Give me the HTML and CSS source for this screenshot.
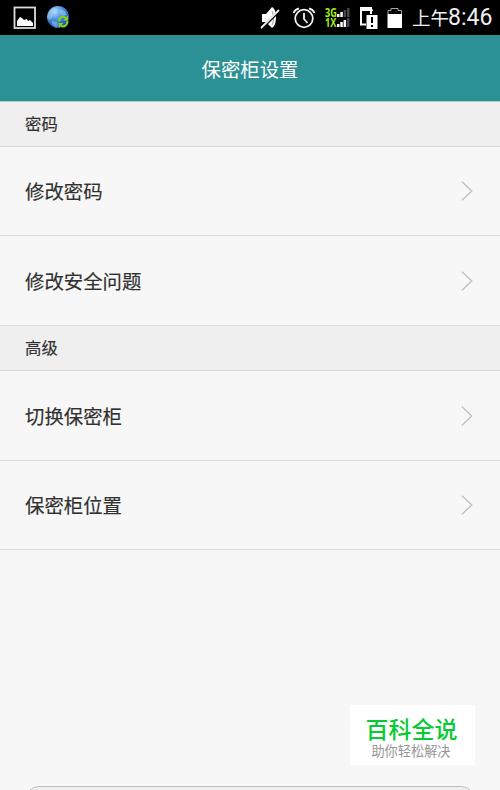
FILE: index.html
```html
<!DOCTYPE html>
<html lang="zh-CN">
<head>
<meta charset="utf-8">
<title>保密柜设置</title>
<link rel="stylesheet" href="styles.css">
</head>
<body>
<div class="screen">
  <div class="status">
    <svg class="picture" width="24" height="24" viewBox="0 0 24 24"><rect x="1.500" y="1.500" width="20.500" height="20.500" fill="none" stroke="#ddd" stroke-width="1.800"/><path d="M4 20v-5l3-4 2 1 2 2 3-1 1 2 2-1 3 3v3z" fill="#fff"/></svg>
    <svg class="globe" width="24" height="24" viewBox="0 0 24 24">
      <defs><radialGradient id="sea" cx=".35" cy=".25" r=".8"><stop offset="0" stop-color="#b8dcfa"/><stop offset=".45" stop-color="#4c91dc"/><stop offset="1" stop-color="#1449a5"/></radialGradient></defs>
      <circle cx="12" cy="11" r="11" fill="url(#sea)"/>
      <path d="M3 6l5-4 4 1-1 3-4 2-1 4-3 2-2-3zM14 3l5 2 2 4-4 1-3-2zM6 15l5 1 1 4-2 2-4-4z" fill="#a5d1f4" opacity=".5"/>
      <path d="M13 15.500c0-5 5-6 7-3M21.500 15c0 5-5 7-7 4" fill="none" stroke="#8bcf25" stroke-width="2"/><path d="M22 9.500v5h-5zM12.500 22v-5h5z" fill="#8bcf25"/>
    </svg>
    <svg class="mute" width="21" height="24" viewBox="0 0 21 24"><path d="M2 8h4l6-7c3 2 4 5 4 10s-1 9-4 11l-6-6H2z" fill="#fff"/><path d="M12 5c2 4 2 10 0 14" fill="none" stroke="#999" stroke-width="1"/><path d="M1.500 22.500L19.500 4.500" stroke="#000" stroke-width="3"/><path d="M1 22L19 4" stroke="#f0f0f0" stroke-width="1.800"/></svg>
    <svg class="alarm" width="24" height="24" viewBox="0 0 24 24"><g fill="none" stroke="#f2f2f2" stroke-width="1.800"><circle cx="12" cy="12.500" r="8.800"/><path d="M1.500 7C2.500 4.500 4.500 3 7 2.500M22.500 7C21.500 4.500 19.500 3 17 2.500M12 7v6l3.500 4"/></g></svg>
    <div class="signal">
      <div class="net"><span>3G</span><svg width="14" height="10" viewBox="0 0 14 10"><path d="M0 6h2.500v3H0zM3.300 4h2.500v5H3.300z" fill="#fff"/><path d="M6.600 2h2.500v7H6.600zM10 0h2.500v9H10z" fill="#484848"/></svg></div>
      <div class="net"><span>1X</span><svg width="14" height="10" viewBox="0 0 14 10"><path d="M0 6h2.500v3H0zM3.300 4h2.500v5H3.300zM6.600 2h2.500v7H6.600z" fill="#fff"/><path d="M10 0h2.500v9H10z" fill="#484848"/></svg></div>
    </div>
    <svg class="sim" width="19" height="24" viewBox="0 0 19 24"><path d="M12 8V2H2v16.500h5" fill="none" stroke="#fff" stroke-width="2"/><path d="M1 1h10l3 3v1H1z" fill="#fff"/><path d="M7.500 9h11v14h-11z" fill="#fff"/><path d="M12 11h2v6h-2zM12 19h2v2h-2z" fill="#000"/></svg>
    <svg class="battery" width="16" height="22" viewBox="0 0 16 22"><path d="M1 7V3.500h3v-2h7v2h3.500V7" fill="none" stroke="#aaa" stroke-width="1"/><path d="M.5 7h14.500v14H.5z" fill="#fff"/></svg>
    <span class="time"><span class="ampm">上午</span>8:46</span>
  </div>
  <header class="title">保密柜设置</header>
  <h2 class="section">密码</h2>
  <div class="row"><span>修改密码</span><svg class="chevron" viewBox="0 0 12 20"><path d="M1 .8L10.800 10 1 19.200"/></svg></div>
  <div class="row tall"><span>修改安全问题</span><svg class="chevron" viewBox="0 0 12 20"><path d="M1 .8L10.800 10 1 19.200"/></svg></div>
  <h2 class="section">高级</h2>
  <div class="row tall"><span>切换保密柜</span><svg class="chevron" viewBox="0 0 12 20"><path d="M1 .8L10.800 10 1 19.200"/></svg></div>
  <div class="row"><span>保密柜位置</span><svg class="chevron" viewBox="0 0 12 20"><path d="M1 .8L10.800 10 1 19.200"/></svg></div>
  <div class="bottom">
    <div class="brand"><div class="brand-name">百科全说</div><div class="brand-sub">助你轻松解决</div></div>
    <div class="button"></div>
  </div>
</div>
</body>
</html>
```
FILE: styles.css
```css
* { box-sizing: border-box; }
body { margin: 0; background: #f7f7f7; font-family: "Noto Sans CJK SC", sans-serif; color: #303030; }
.screen { width: 500px; height: 790px; overflow: hidden; display: flex; flex-direction: column; }
.status { height: 35px; flex: none; background: #000; display: flex; align-items: center; padding-left: 13px; }
.status svg { flex: none; }
.globe { margin-left: 9px; }
.mute { margin-left: 190px; }
.alarm { margin-left: 11px; }
.signal { width: 26px; margin-left: 9px; }
.net { display: flex; align-items: center; height: 10px; width: 26px; color: #a1ee16; font: bold 11.500px/10px "Open Sans", sans-serif; }
.net span { width: 12px; flex: none; transform: scaleX(.8); transform-origin: left; }
.sim { margin-left: 8px; }
.battery { margin-left: 9px; }
.time { margin-left: 9px; display: flex; align-items: center; color: #eee; font: 23px/35px Roboto, sans-serif; white-space: nowrap; }
.ampm { width: 36px; font: 18.500px/35px "Noto Sans CJK SC", sans-serif; }
.title { height: 67px; flex: none; background: #2c9195; color: #fff; text-align: center; font-size: 19.400px; line-height: 67px; border-bottom: 1px solid #a9d0d1; }
.section { height: 45px; flex: none; margin: 0; padding-left: 25px; background: #efefef; border-bottom: 1px solid #d8d8d8; font-size: 16.400px; font-weight: 400; line-height: 43px; -webkit-text-stroke: .15px #303030; }
.row { height: 89px; flex: none; padding: 0 27px 0 25px; display: flex; align-items: center; justify-content: space-between; border-bottom: 1px solid #dcdcdc; font-size: 19.400px; }
.row span { padding-bottom: 2px; -webkit-text-stroke: .15px #303030; }
.row.tall { height: 90px; }
.row.tall span { padding-bottom: 0; }
.chevron { width: 12px; height: 20px; fill: none; stroke: #bdbdbd; stroke-width: 1.200; }
.bottom { flex: 1; display: flex; flex-direction: column; padding-top: 155px; }
.brand { width: 125px; height: 60px; flex: none; margin-left: 350px; padding-top: 7px; background: #fff; text-align: center; white-space: nowrap; }
.brand-name { font-size: 23px; line-height: 32px; font-weight: 500; color: #06cb32; padding-right: 2px; }
.brand-sub { font-size: 13.200px; line-height: 13px; color: #969696; padding-right: 3px; }
.button { width: 450px; height: 50px; flex: none; margin: 21px 0 0 25px; border: 1px solid #bdbdbd; border-radius: 14px; background: #f0f0f0; }
```
